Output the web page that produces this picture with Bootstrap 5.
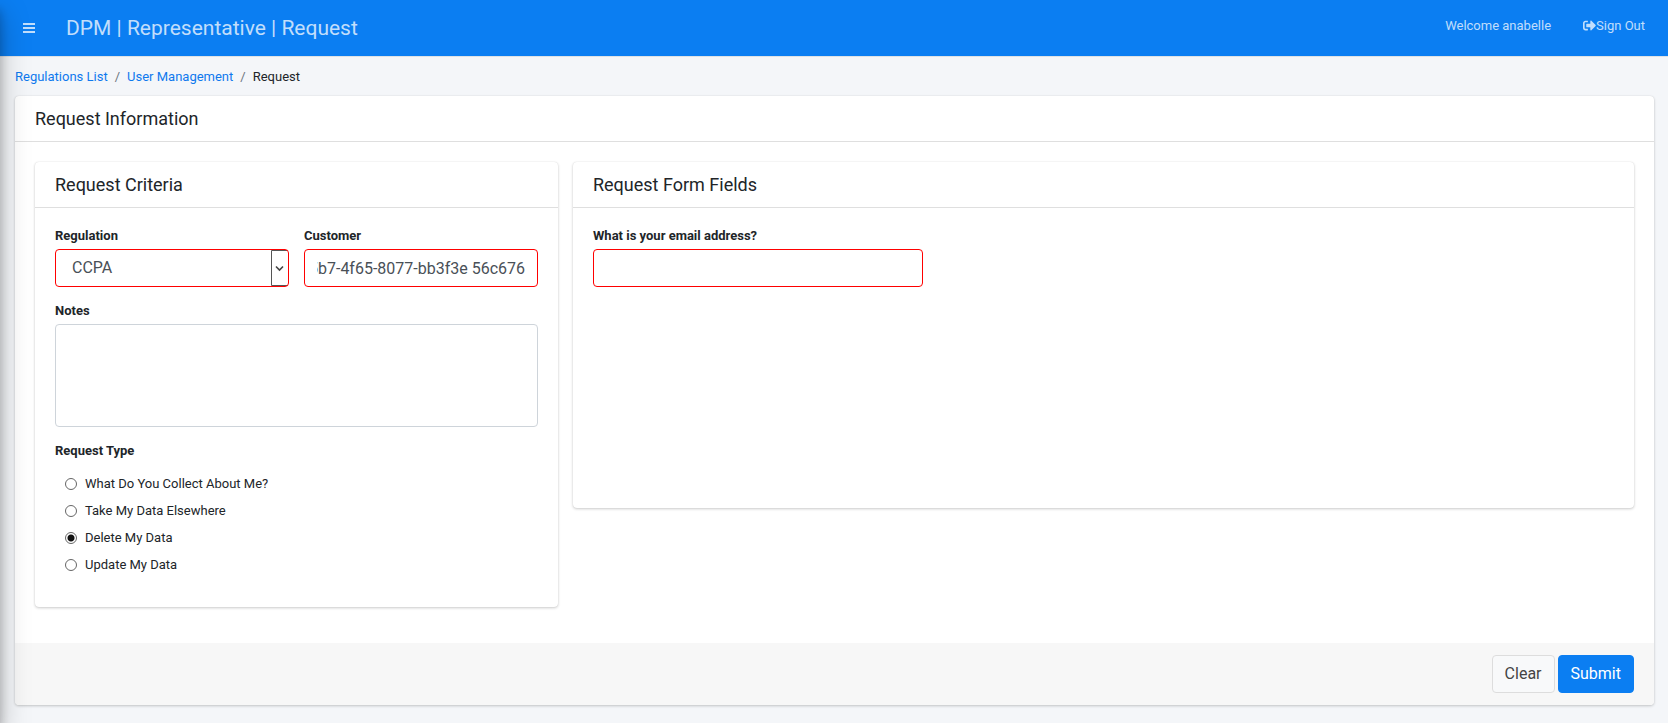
<!DOCTYPE html>
<html lang="en">
<head>
<meta charset="utf-8">
<meta name="viewport" content="width=device-width, initial-scale=1">
<title>DPM | Representative | Request</title>
<link href="https://cdn.jsdelivr.net/npm/bootstrap@5.3.0/dist/css/bootstrap.min.css" rel="stylesheet">
<style>
  :root { --dpm-blue: #0b7ef2; --dpm-ink: #212529; }
  body {
    font-family: Roboto, "Liberation Sans", sans-serif;
    font-size: 13px;
    color: var(--dpm-ink);
    background: #f4f6f9;
  }
  /* closed sidebar: only its shadow reaches the page */
  .side-drawer {
    position: fixed; top: 0; bottom: 0; left: -250px; width: 250px; z-index: 1040;
    box-shadow: 0 14px 28px rgba(0,0,0,.25), 0 10px 10px rgba(0,0,0,.22);
    pointer-events: none;
  }
  .top-bar { background: var(--dpm-blue); border-bottom: 1px solid #dee2e6; min-height: 57px; --bs-navbar-padding-y: 0; }
  .top-bar, .top-bar a, .top-bar button { color: rgba(255,255,255,.75); }
  .menu-btn { padding: 8px; line-height: 1; border: 0; background: none; margin-left: 14px; }
  .page-name { font-size: 21px; line-height: 32px; margin-left: 22px; }
  .top-links { margin-right: 23px; gap: 32px; line-height: 20px; padding-bottom: 5px; }
  .top-links a { text-decoration: none; }
  .crumbs { padding: 10px 15px 9px; line-height: 20px; }
  .crumbs .breadcrumb { --bs-breadcrumb-divider-color: #6c757d; --bs-breadcrumb-item-active-color: var(--dpm-ink); --bs-breadcrumb-item-padding-x: 7px; margin: 0; }
  .crumbs a { color: #0f79ee; text-decoration: none; }
  .page-body { padding: 0 14px 15px 15px; }
  .panel {
    --bs-card-border-width: 0; --bs-card-bg: #fff; --bs-card-border-radius: 4px; --bs-card-inner-border-radius: 4px;
    --bs-card-cap-padding-y: 12px; --bs-card-cap-padding-x: 20px;
    --bs-card-spacer-y: 20px; --bs-card-spacer-x: 20px;
    box-shadow: 0 0 1px rgba(0,0,0,.125), 0 1px 3px rgba(0,0,0,.2);
  }
  .panel > .card-header { background: transparent; border-bottom: 1px solid rgba(0,0,0,.125); }
  .panel > .card-footer { background: #f7f7f7; border: 0; }
  .panel h2 { font-size: 18px; line-height: 21px; font-weight: 400; margin: 0; }
  .tight { --bs-gutter-x: 15px; }
  .panel .form-label { font-weight: 700; line-height: 15px; margin-bottom: 6px; display: block; font-size: 13px; padding: 0; }
  .field { height: 38px; padding: 6px 12px; font-size: 16px; line-height: 24px; color: #495057; border-radius: 4px; border: 1px solid #ced4da; }
  .needed { border-color: #f00; }
  .pick {
    padding-left: 16px;
    background: #fff url("data:image/svg+xml,%3Csvg xmlns='http://www.w3.org/2000/svg' width='17' height='36'%3E%3Cpath d='M17 .5H.5v35H17' fill='none' stroke='%23555'/%3E%3Cpath d='M5 16.500l3.500 3.500 3.500-3.500' fill='none' stroke='%23444' stroke-width='1.600'/%3E%3C/svg%3E") no-repeat right center;
    background-size: 17px 36px;
  }
  .notes { height: 103px; resize: none; }
  .choices { padding: 6px 0 9px 10px; }
  .choice { display: flex; align-items: center; gap: 8px; height: 27px; min-height: 0; margin: 0; padding: 0; }
  .choice .form-check-input {
    float: none; margin: 0; width: 12px; height: 12px; border: 1px solid #666; background: #fff;
  }
  .choice .form-check-input:checked { background: radial-gradient(circle, #111 0 3px, #fff 4px); border-color: #666; }
  .fields-body { min-height: 300px; }
  .actions { gap: 3px; }
  .act { --bs-btn-font-size: 16px; --bs-btn-padding-y: 6px; --bs-btn-padding-x: 12px; --bs-btn-border-radius: 4px; line-height: 24px; }
  .act-clear { --bs-btn-bg: #f8f9fa; --bs-btn-border-color: #ddd; --bs-btn-color: #444; }
  .act-submit { --bs-btn-bg: var(--dpm-blue); --bs-btn-border-color: var(--dpm-blue); --bs-btn-color: #fff; }
</style>
</head>
<body>
<div class="side-drawer"></div>

<nav class="navbar top-bar d-flex flex-nowrap">
  <button class="menu-btn d-flex" type="button" aria-label="Toggle menu">
    <svg width="14" height="14" viewBox="0 0 14 14" fill="currentColor"><path d="M1 2h12v2H1zM1 6h12v2H1zM1 10h12v2H1z"/></svg>
  </button>
  <span class="page-name me-auto">DPM | Representative | Request</span>
  <div class="top-links d-flex">
    <span>Welcome anabelle</span>
    <a href="#" class="d-flex align-items-center"><svg width="13" height="13" viewBox="0 0 512 512" fill="currentColor" aria-hidden="true"><path d="M497 273L329 441c-15 15-41 4.500-41-17v-96H152c-13.300 0-24-10.700-24-24v-96c0-13.300 10.700-24 24-24h136V88c0-21.400 25.900-32 41-17l168 168c9.300 9.400 9.300 24.600 0 34zM192 436v-40c0-6.600-5.400-12-12-12H96c-17.700 0-32-14.300-32-32V160c0-17.700 14.300-32 32-32h84c6.600 0 12-5.400 12-12V76c0-6.600-5.400-12-12-12H96c-53 0-96 43-96 96v192c0 53 43 96 96 96h84c6.600 0 12-5.400 12-12z"/></svg>Sign Out</a>
  </div>
</nav>

<nav class="crumbs" aria-label="breadcrumb">
  <ol class="breadcrumb">
    <li class="breadcrumb-item"><a href="#">Regulations List</a></li>
    <li class="breadcrumb-item"><a href="#">User Management</a></li>
    <li class="breadcrumb-item active" aria-current="page">Request</li>
  </ol>
</nav>

<main class="page-body">
  <form class="card panel">
    <div class="card-header"><h2>Request Information</h2></div>
    <div class="card-body">
      <div class="row tight align-items-start">
        <div class="col-4">
          <section class="card panel mb-3">
            <div class="card-header"><h2>Request Criteria</h2></div>
            <div class="card-body">
              <div class="row tight mb-3">
                <div class="col-6">
                  <label class="form-label" for="regulation">Regulation</label>
                  <select class="form-select field needed pick" id="regulation"><option>CCPA</option></select>
                </div>
                <div class="col-6">
                  <label class="form-label" for="customer">Customer</label>
                  <input class="form-control field needed" id="customer" type="text" value="5b7-4f65-8077-bb3f3e 56c676">
                </div>
              </div>
              <div class="mb-3">
                <label class="form-label" for="notes">Notes</label>
                <textarea class="form-control field notes d-block" id="notes"></textarea>
              </div>
              <fieldset>
                <legend class="form-label">Request Type</legend>
                <div class="choices">
                  <div class="form-check choice"><input class="form-check-input" type="radio" name="kind" id="k1"><label for="k1">What Do You Collect About Me?</label></div>
                  <div class="form-check choice"><input class="form-check-input" type="radio" name="kind" id="k2"><label for="k2">Take My Data Elsewhere</label></div>
                  <div class="form-check choice"><input class="form-check-input" type="radio" name="kind" id="k3" checked><label for="k3">Delete My Data</label></div>
                  <div class="form-check choice"><input class="form-check-input" type="radio" name="kind" id="k4"><label for="k4">Update My Data</label></div>
                </div>
              </fieldset>
            </div>
          </section>
        </div>
        <div class="col-8">
          <section class="card panel mb-3">
            <div class="card-header"><h2>Request Form Fields</h2></div>
            <div class="card-body fields-body">
              <div class="row tight">
                <div class="col-4">
                  <label class="form-label" for="email">What is your email address?</label>
                  <input class="form-control field needed" id="email" type="email">
                </div>
              </div>
            </div>
          </section>
        </div>
      </div>
    </div>
    <div class="card-footer actions d-flex justify-content-end">
      <button class="btn act act-clear" type="reset">Clear</button>
      <button class="btn act act-submit" type="submit">Submit</button>
    </div>
  </form>
</main>

<script src="https://cdn.jsdelivr.net/npm/bootstrap@5.3.0/dist/js/bootstrap.bundle.min.js"></script>
<script>
  // Long customer ids show their last characters
  const customer = document.getElementById('customer');
  customer.scrollLeft = customer.scrollWidth;
</script>
</body>
</html>
